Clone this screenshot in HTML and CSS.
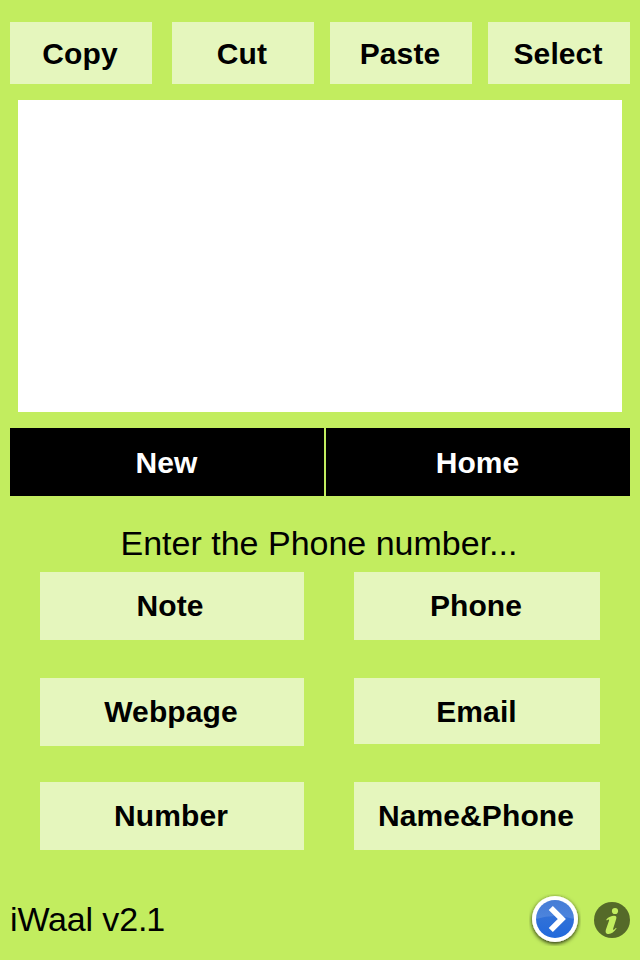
FILE: index.html
```html
<!DOCTYPE html>
<html lang="en">
<head>
<meta charset="utf-8">
<title>iWaal</title>
<link rel="stylesheet" href="styles.css">
</head>
<body>
<main class="screen">
  <div class="toolbar">
    <button>Copy</button>
    <button>Cut</button>
    <button>Paste</button>
    <button>Select</button>
  </div>
  <div class="editor"></div>
  <div class="actions">
    <button>New</button>
    <button>Home</button>
  </div>
  <p class="prompt">Enter the Phone number...</p>
  <div class="types">
    <button class="note">Note</button>
    <button>Phone</button>
    <button>Webpage</button>
    <button class="short">Email</button>
    <button>Number</button>
    <button>Name&amp;Phone</button>
  </div>
  <footer class="footer">
    <span class="version">iWaal v2.<span class="minor">1</span></span>
    <svg class="next" width="52" height="52" viewBox="0 0 52 52">
      <defs>
        <linearGradient id="blue" x1="0" y1="0" x2="0" y2="1">
          <stop offset="0" stop-color="#3f78d4"/>
          <stop offset="1" stop-color="#2169dc"/>
        </linearGradient>
        <linearGradient id="gloss" x1="0" y1="0" x2="0" y2="1">
          <stop offset="0" stop-color="#fff" stop-opacity=".04"/>
          <stop offset="1" stop-color="#fff" stop-opacity=".14"/>
        </linearGradient>
        <filter id="shadow" x="-20%" y="-20%" width="140%" height="140%">
          <feDropShadow dx="0" dy="1.500" stdDeviation="2" flood-color="#000" flood-opacity=".85"/>
        </filter>
      </defs>
      <circle cx="26" cy="25" r="23" fill="#fff" filter="url(#shadow)"/>
      <circle cx="26" cy="25" r="19" fill="url(#blue)"/>
      <path d="M7 25A19 19 0 0 1 45 25Q26 19 7 25Z" fill="url(#gloss)"/>
      <path d="M21.800 14L32.800 25L21.800 36" fill="none" stroke="#fff" stroke-width="5.800"/>
    </svg>
    <svg class="info" width="36" height="36" viewBox="0 0 36 36">
      <circle cx="18" cy="18" r="18" fill="#556a29"/>
      <circle cx="21" cy="9" r="3.100" fill="#c2ed5f"/>
      <path d="M12.300 17.500C14.500 15 17.500 13.800 20 13.800C22.300 13.800 22.800 15 22.200 17L19.200 26.500C18.700 28.500 20 28 21.900 25.700L22.600 26.300C20 30 17.500 32 14.700 32C11.800 32 11.100 30 12 27.200L15 18.700C15.400 17 14.500 17 12.800 18.500Z" fill="#c2ed5f"/>
    </svg>
  </footer>
</main>
</body>
</html>
```
FILE: styles.css
```css
* { box-sizing: border-box; }
body { margin: 0; background: #c2ed5f; font-family: "Liberation Sans", Arial, sans-serif; color: #000; }
.screen { width: 640px; height: 960px; padding: 22px 10px 0; overflow: hidden; background: #c2ed5f; }
button { border: 0; padding: 0 2px 0 0; background: #e5f6bd; color: #000; font: bold 30px/34px "Liberation Sans", Arial, sans-serif; letter-spacing: .1px; white-space: nowrap; }
.toolbar { display: grid; grid-template-columns: 162px 158px 158px 142px; height: 62px; }
.toolbar button { width: 142px; padding-top: 1px; }
.editor { height: 312px; margin: 16px 8px; background: #fff; }
.actions { display: grid; grid-template-columns: 314px 304px; gap: 2px; height: 68px; }
.actions button { padding: 2px 1px 0 0; background: #000; color: #fff; }
.prompt { height: 40px; margin: 27px 0 9px; padding-right: 2px; font-size: 34px; line-height: 40px; text-align: center; white-space: nowrap; }
.types { display: grid; grid-template-columns: 264px 246px; grid-template-rows: 106px 104px 68px; column-gap: 50px; margin: 0 30px; }
.types button { height: 68px; }
.types .note { padding-right: 4px; }
.types .short { height: 66px; padding: 2px 1px 0 0; }
.footer { display: flex; align-items: center; height: 52px; margin-top: 44px; }
.version { margin-top: -2px; font-size: 34px; line-height: 40px; letter-spacing: -.15px; white-space: nowrap; }
.minor { margin-left: -1px; }
.next { margin-left: auto; }
.info { margin-left: 13px; }
```
